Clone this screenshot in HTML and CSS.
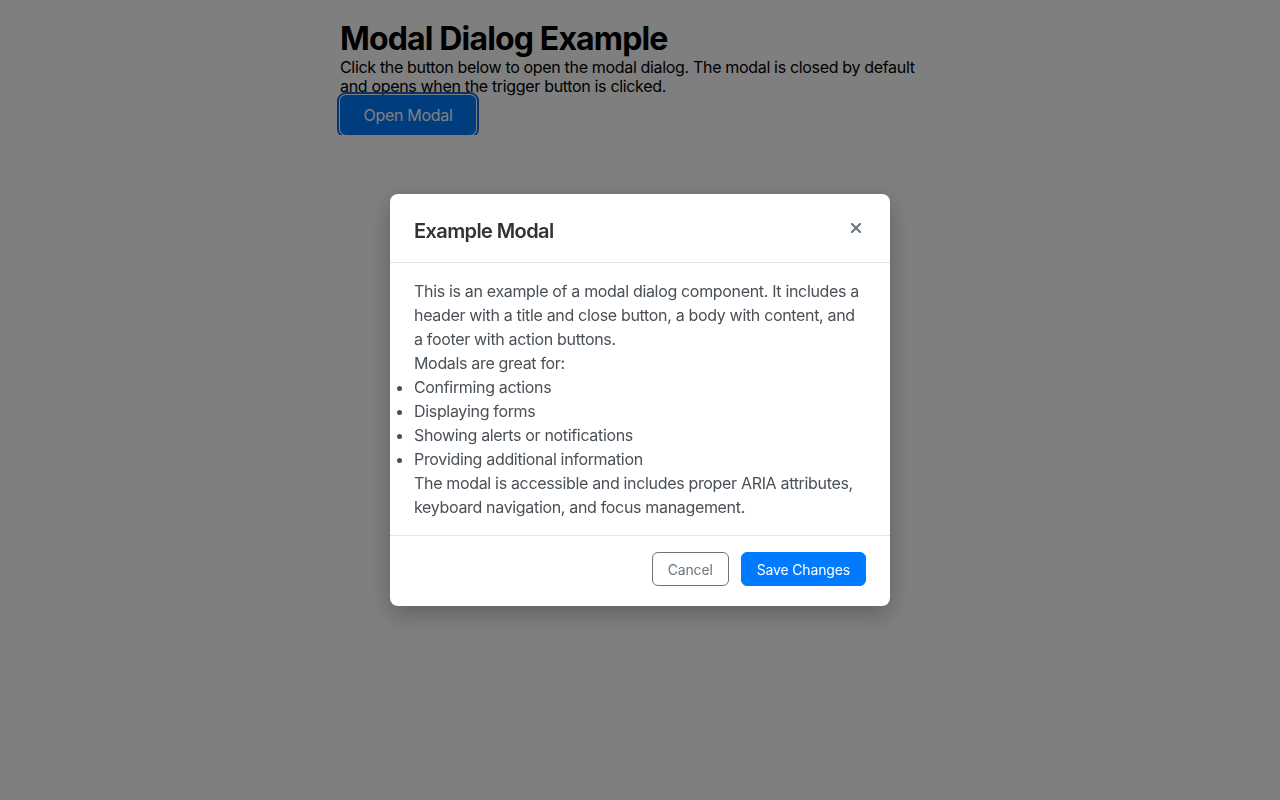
FILE: index.html
```html
<!DOCTYPE html>
<html lang="en">
<head>
<meta charset="utf-8">
<title>Modal Dialog Example</title>
<link rel="stylesheet" href="styles.css">
</head>
<body>
<main class="page">
  <h1 class="page-title">Modal Dialog Example</h1>
  <p class="page-text">Click the button below to open the modal dialog. The modal is closed by default and opens when the trigger button is clicked.</p>
  <button class="open-btn" type="button">Open Modal</button>
</main>
<div class="overlay">
  <div class="modal" role="dialog" aria-modal="true" aria-labelledby="modal-title">
    <header class="modal-header">
      <h2 class="modal-title" id="modal-title">Example Modal</h2>
      <button class="close-btn" type="button" aria-label="Close">
        <svg width="12" height="12" viewBox="0 0 12 12" aria-hidden="true"><path d="M2 2 L10 10 M10 2 L2 10" stroke="currentColor" stroke-width="2.2" stroke-linecap="round"/></svg>
      </button>
    </header>
    <div class="modal-body">
      <p>This is an example of a modal dialog component. It includes a header with a title and close button, a body with content, and a footer with action buttons.</p>
      <p>Modals are great for:</p>
      <ul class="modal-list">
        <li>Confirming actions</li>
        <li>Displaying forms</li>
        <li>Showing alerts or notifications</li>
        <li>Providing additional information</li>
      </ul>
      <p>The modal is accessible and includes proper ARIA attributes, keyboard navigation, and focus management.</p>
    </div>
    <footer class="modal-footer">
      <button class="btn btn-cancel" type="button">Cancel</button>
      <button class="btn btn-save" type="button">Save Changes</button>
    </footer>
  </div>
</div>
</body>
</html>
```
FILE: styles.css
```css
* { box-sizing: border-box; }
html, body { margin: 0; padding: 0; }
body {
  font-family: Inter, "Noto Sans", "Liberation Sans", sans-serif;
  color: #000;
  background: #fff;
}
.page {
  width: 600px;
  margin: 0 auto;
  padding-top: 20px;
}
.page-title {
  margin: 0;
  font-size: 32px;
  line-height: 38px;
  font-weight: 700;
  letter-spacing: -0.85px;
}
.page-text {
  margin: 0;
  font-size: 16px;
  line-height: 19px;
  letter-spacing: -0.33px;
}
.open-btn {
  display: block;
  margin-top: -1px;
  width: 136px;
  height: 40px;
  border: none;
  border-radius: 6px;
  background: #007bff;
  color: #fff;
  font-family: inherit;
  font-size: 16px;
  letter-spacing: -0.3px;
  outline: 2px solid #0a6be0;
  outline-offset: 1px;
}
.overlay {
  position: fixed;
  inset: 0;
  background: rgba(0, 0, 0, 0.5);
  display: flex;
  justify-content: center;
  padding-top: 194px;
}
.modal {
  width: 500px;
  height: max-content;
  background: #fff;
  border-radius: 8px;
  box-shadow: 0 8px 24px rgba(0, 0, 0, 0.25);
}
.modal-header {
  display: flex;
  align-items: center;
  justify-content: space-between;
  padding: 0 24px;
  height: 69px;
  border-bottom: 1px solid #e5e5e5;
}
.modal-title {
  margin: 6px 0 0;
  font-size: 20px;
  font-weight: 600;
  color: #333;
  letter-spacing: -0.6px;
}
.close-btn {
  display: flex;
  align-items: center;
  justify-content: center;
  width: 24px;
  height: 24px;
  margin-right: -2px;
  padding: 0;
  border: none;
  background: none;
  color: #6c757d;
}
.modal-body {
  padding: 16px 25px 16px 24px;
  font-size: 16px;
  line-height: 24px;
  color: #495057;
  letter-spacing: -0.33px;
}
.modal-body p { margin: 0; }
.modal-list {
  margin: 0;
  padding: 0;
  list-style: disc outside;
}
.modal-footer {
  display: flex;
  justify-content: flex-end;
  gap: 12px;
  padding: 16px 24px 20px;
  border-top: 1px solid #e5e5e5;
}
.btn {
  height: 34px;
  padding: 0 15px;
  border-radius: 6px;
  font-family: inherit;
  font-size: 14px;
  letter-spacing: -0.15px;
}
.btn-cancel {
  border: 1px solid #6c757d;
  background: #fff;
  color: #6c757d;
}
.btn-save {
  border: 1px solid #007bff;
  background: #007bff;
  color: #fff;
}
```
